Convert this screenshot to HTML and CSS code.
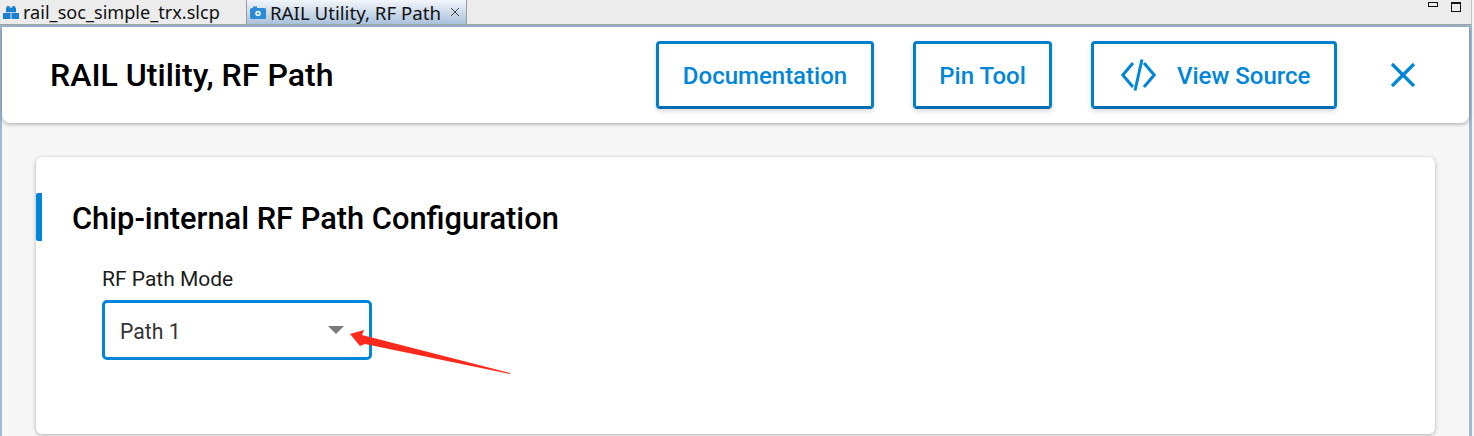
FILE: index.html
```html
<!DOCTYPE html>
<html lang="en">
<head>
<meta charset="utf-8">
<title>RAIL Utility, RF Path</title>
<link rel="stylesheet" href="styles.css">
</head>
<body>
<div class="tabbar">
  <div class="tab">
    <svg class="tab-icon" viewBox="0 0 16 13"><path d="M4 0h2.500v1.500h3V0H12v1.500h1v4.700H3V1.500h1zM0 7h7.500v6H0zM8.500 7H16v6H8.500z" fill="#1b80d0"/></svg>
    <span>rail_soc_simple_trx.slcp</span>
  </div>
  <div class="tab tab-active">
    <svg class="tab-icon" viewBox="0 0 16 13"><path d="M1.500 2H3V0.500h4V2h7.500A1.500 1.500 0 0 1 16 3.500v8a1.500 1.500 0 0 1-1.500 1.500h-13A1.500 1.500 0 0 1 0 11.500v-8A1.500 1.500 0 0 1 1.500 2z" fill="#2a8ad4"/><circle cx="8" cy="7.500" r="2.800" fill="#e8f2fa"/><circle cx="8" cy="7.500" r="1" fill="#2a8ad4"/></svg>
    <span class="tab-label">RAIL Utility, RF Path</span>
    <svg class="tab-close" viewBox="0 0 10 10"><path d="M1 1l8 8M9 1l-8 8" stroke="#444" stroke-width="1" fill="none"/></svg>
  </div>
  <div class="window-controls">
    <span class="ctl-min"></span>
    <span class="ctl-max"></span>
  </div>
</div>
<div class="frame">
  <header class="topbar">
    <h1 class="title">RAIL Utility, RF Path</h1>
    <div class="actions">
      <button class="btn btn-doc">Documentation</button>
      <button class="btn btn-pin">Pin Tool</button>
      <button class="btn btn-src">
        <svg class="code-icon" viewBox="0 0 35 32"><path d="M12 4L1.800 16L12 28M23 4L33.200 16L23 28M21 0.500L14 31.500" stroke="#0086d9" stroke-width="3" fill="none"/></svg>
        <span>View Source</span>
      </button>
      <svg class="close-icon" viewBox="0 0 26 26"><path d="M2 2l22 22M24 2L2 24" stroke="#0086d9" stroke-width="3.200" fill="none"/></svg>
    </div>
  </header>
  <main class="content">
    <section class="card">
      <h2 class="card-title">Chip-internal RF Path Configuration</h2>
      <div class="field">
        <label class="field-label">RF Path Mode</label>
        <div class="select">
          <span class="select-value">Path 1</span>
          <span class="caret"></span>
        </div>
      </div>
    </section>
  </main>
</div>
<svg class="annotation" viewBox="0 0 170 60"><path d="M0 4L14 0L12 5L160 43L160 44L15 14L10 16z" fill="#fb2a1c"/></svg>
</body>
</html>
```
FILE: styles.css
```css
* { box-sizing: border-box; }
html, body { margin: 0; height: 436px; overflow: hidden; }
body { position: relative; background: #f5f5f5; font-family: Roboto, "Noto Sans", sans-serif; }

.tabbar {
  width: 1472px;
  height: 25px;
  display: flex;
  align-items: stretch;
  background: #ececec;
  border-bottom: 1px solid #a3a3a3;
  border-right: 1px solid #c4c4c4;
  font-family: "Noto Sans", "Open Sans", sans-serif;
  font-size: 18.100px;
  color: #111;
}
.tab {
  display: flex;
  align-items: center;
  gap: 4px;
  width: 247px;
  padding: 0 0 0 3px;
  border-right: 1px solid #9a9a9a;
  white-space: nowrap;
}
.tab-active {
  width: 220px;
  background: linear-gradient(#f3f6fa, #a9c1dc);
}
.tab-label { font-size: 18.700px; }
.tab-icon { width: 16px; height: 13px; flex: none; }
.tab-close { width: 10px; height: 10px; margin-left: 5px; flex: none; }
.window-controls {
  margin-left: auto;
  display: flex;
  gap: 13px;
  padding: 2px 10px 0 0;
}
.ctl-min { width: 10px; height: 5px; border: 1px solid #111; }
.ctl-max { width: 10px; height: 10px; border: 1px solid #111; border-top-width: 2px; }

.frame {
  width: 1472px;
  height: 411px;
  background: #f7f7f7;
  border-style: solid;
  border-color: #a0b9d6;
  border-width: 2px 3px 0 2px;
}
.topbar {
  height: 96px;
  padding: 0 53px 0 48px;
  display: flex;
  align-items: center;
  justify-content: space-between;
  background: #fff;
  border-radius: 0 0 8px 8px;
  box-shadow: 0 1px 4px rgba(0, 0, 0, .35);
}
.title { margin: 0; font-size: 32.100px; font-weight: 500; color: #000; }
.actions { display: flex; align-items: center; }
.btn {
  height: 68px;
  padding: 2px 0 0;
  display: flex;
  align-items: center;
  justify-content: center;
  background: #fff;
  border: 3px solid #007fcb;
  border-bottom-color: #006eb2;
  border-radius: 4px;
  color: #0086d9;
  font-family: Roboto, sans-serif;
  font-size: 24px;
  font-weight: 500;
  box-shadow: 0 2px 5px rgba(0, 0, 0, .16);
}
.btn-doc { width: 218px; margin-right: 39px; }
.btn-pin { width: 139px; margin-right: 39px; }
.btn-src { width: 246px; padding-left: 27px; justify-content: flex-start; gap: 21px; margin-right: 53px; }
.code-icon { width: 35px; height: 32px; flex: none; margin-top: -2px; }
.close-icon { width: 26px; height: 26px; }

.content { padding: 34px 34px 0; }
.card {
  height: 277px;
  padding-top: 36px;
  background: #fff;
  border-radius: 6px;
  box-shadow: 0 1px 4px rgba(0, 0, 0, .3);
}
.card-title {
  margin: 0;
  height: 48px;
  padding-left: 30px;
  border-left: 6px solid #0086d9;
  border-radius: 2px 0 0 2px;
  font-size: 30.800px;
  font-weight: 500;
  line-height: 52px;
  color: #000;
}
.field { padding: 26px 0 0 66px; }
.field-label { display: block; font-size: 21px; line-height: 24px; color: #1c1c1c; }
.select {
  width: 270px;
  height: 60px;
  margin-top: 9px;
  padding: 0 25px 0 15px;
  display: flex;
  align-items: center;
  justify-content: space-between;
  background: #fff;
  border: 3px solid #0086d9;
  border-radius: 5px;
  font-size: 21.200px;
  color: #333;
}
.select-value { padding-top: 2px; }
.caret {
  width: 0;
  height: 0;
  border-left: 8px solid transparent;
  border-right: 8px solid transparent;
  border-top: 8px solid #7a7a7a;
}
.annotation {
  position: absolute;
  left: 350px;
  top: 330px;
  width: 170px;
  height: 60px;
}
```
